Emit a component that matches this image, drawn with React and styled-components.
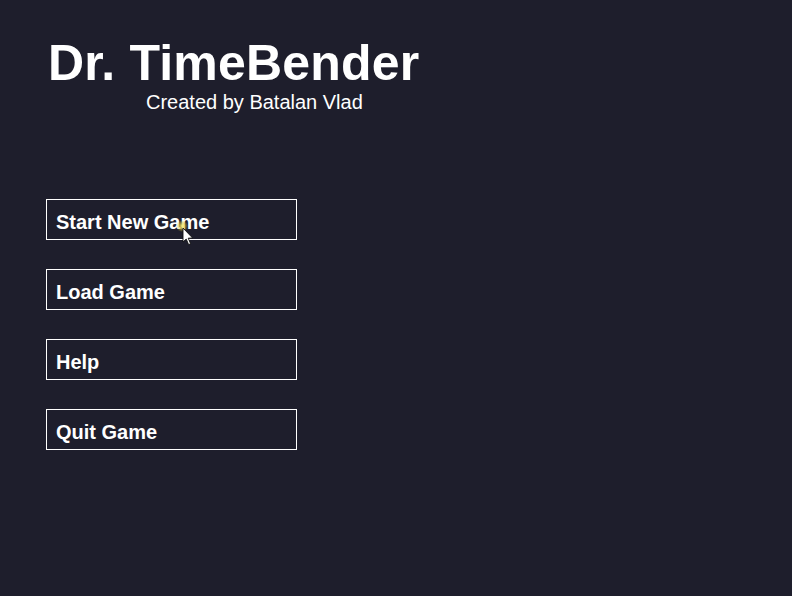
import React from "react";
import styled, { createGlobalStyle } from "styled-components";

const GlobalStyle = createGlobalStyle`
  html, body {
    margin: 0;
    padding: 0;
    background: #1e1e2c;
  }
  body {
    font-family: "Liberation Sans", Arial, sans-serif;
    color: #ffffff;
  }
`;

const Screen = styled.div`
  position: relative;
  width: 792px;
  height: 596px;
  background: #1e1e2c;
  overflow: hidden;
  padding: 34px 0 0 46px;
  box-sizing: border-box;
`;

const TitleBlock = styled.header`
  display: flex;
  flex-direction: column;
  padding-left: 2px;
`;

const Title = styled.h1`
  margin: 0;
  font-size: 50px;
  font-weight: bold;
  line-height: 58px;
  letter-spacing: 0.2px;
`;

const Subtitle = styled.div`
  margin: -1px 0 0 98px;
  font-size: 20px;
  line-height: 22px;
`;

const Menu = styled.nav`
  display: flex;
  flex-direction: column;
  gap: 29px;
  margin-top: 86px;
`;

const MenuButton = styled.button`
  width: 251px;
  height: 41px;
  box-sizing: border-box;
  border: 1px solid #ffffff;
  background: transparent;
  color: #ffffff;
  font-family: "Liberation Sans", Arial, sans-serif;
  font-size: 20px;
  font-weight: bold;
  text-align: left;
  padding: 6px 0 0 9px;
  cursor: pointer;
`;

const Cursor = styled.svg`
  position: absolute;
  left: ${(p) => p.x - 10}px;
  top: ${(p) => p.y - 10}px;
  pointer-events: none;
`;

const items = ["Start New Game", "Load Game", "Help", "Quit Game"];

export default function App() {
  return (
    <>
      <GlobalStyle />
      <Screen>
        <TitleBlock>
          <Title>Dr. TimeBender</Title>
          <Subtitle>Created by Batalan Vlad</Subtitle>
        </TitleBlock>
        <Menu>
          {items.map((label) => (
            <MenuButton key={label}>{label}</MenuButton>
          ))}
        </Menu>
        <Cursor x={182} y={226} width="32" height="36" viewBox="0 0 32 36">
          <defs>
            <radialGradient id="glow">
              <stop offset="0%" stopColor="#fff27a" stopOpacity="0.95" />
              <stop offset="60%" stopColor="#d8c43a" stopOpacity="0.5" />
              <stop offset="100%" stopColor="#d8c43a" stopOpacity="0" />
            </radialGradient>
          </defs>
          <circle cx="10" cy="10" r="6" fill="url(#glow)" />
          <path
            d="M11 12 L11 26 L14.2 23 L16.6 28.6 L18.6 27.7 L16.2 22.2 L20.6 22 Z"
            fill="#ffffff"
            stroke="#111111"
            strokeWidth="0.9"
            strokeLinejoin="round"
          />
        </Cursor>
      </Screen>
    </>
  );
}
